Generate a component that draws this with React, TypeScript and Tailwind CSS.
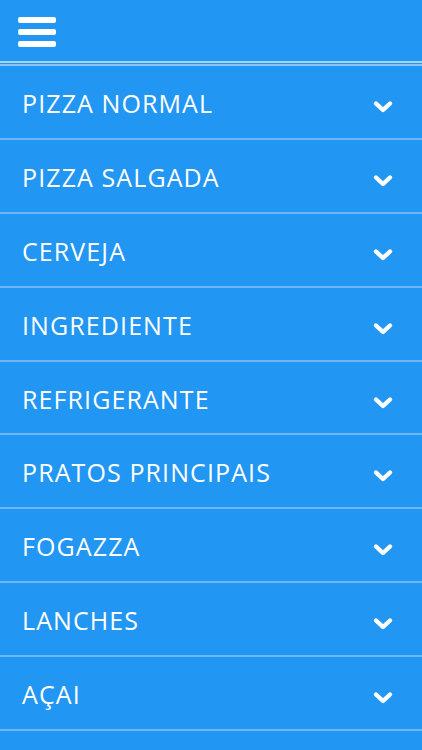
import React from "react";

const items = [
  "PIZZA NORMAL",
  "PIZZA SALGADA",
  "CERVEJA",
  "INGREDIENTE",
  "REFRIGERANTE",
  "PRATOS PRINCIPAIS",
  "FOGAZZA",
  "LANCHES",
  "AÇAI",
];

function Chevron() {
  return (
    <svg width="22" height="16" viewBox="0 0 22 16" className="block">
      <polyline
        points="4,4.5 11,11 18,4.5"
        fill="none"
        stroke="white"
        strokeWidth="4.4"
        strokeLinecap="round"
        strokeLinejoin="round"
      />
    </svg>
  );
}

export default function App() {
  return (
    <div
      className="w-[422px] h-[750px] overflow-hidden bg-[#2196f3] text-white"
      style={{ fontFamily: '"Open Sans", "Noto Sans", sans-serif' }}
    >
      <div className="h-[61px] flex items-center pl-[18px]">
        <div className="flex flex-col gap-[6px] pt-[2px]">
          <div className="w-[38px] h-[6px] rounded-[2px] bg-white" />
          <div className="w-[38px] h-[6px] rounded-[2px] bg-white" />
          <div className="w-[38px] h-[6px] rounded-[2px] bg-white" />
        </div>
      </div>
      <div className="h-[2px] bg-[#a9d3f9]" />
      <div className="h-[1px]" />
      <div className="h-[2px] bg-[#8cc4f7]" />
      <div className="flex flex-col">
        {items.map((t) => (
          <div
            key={t}
            className="h-[73.9px] shrink-0 border-b-2 border-[#6fb6f6] flex items-center justify-between pl-[22px] pr-[28px]"
          >
            <span className="text-[25px] font-medium leading-none tracking-[1.1px] pt-[3px]">{t}</span>
            <div className="mt-[10px]">
              <Chevron />
            </div>
          </div>
        ))}
      </div>
    </div>
  );
}
